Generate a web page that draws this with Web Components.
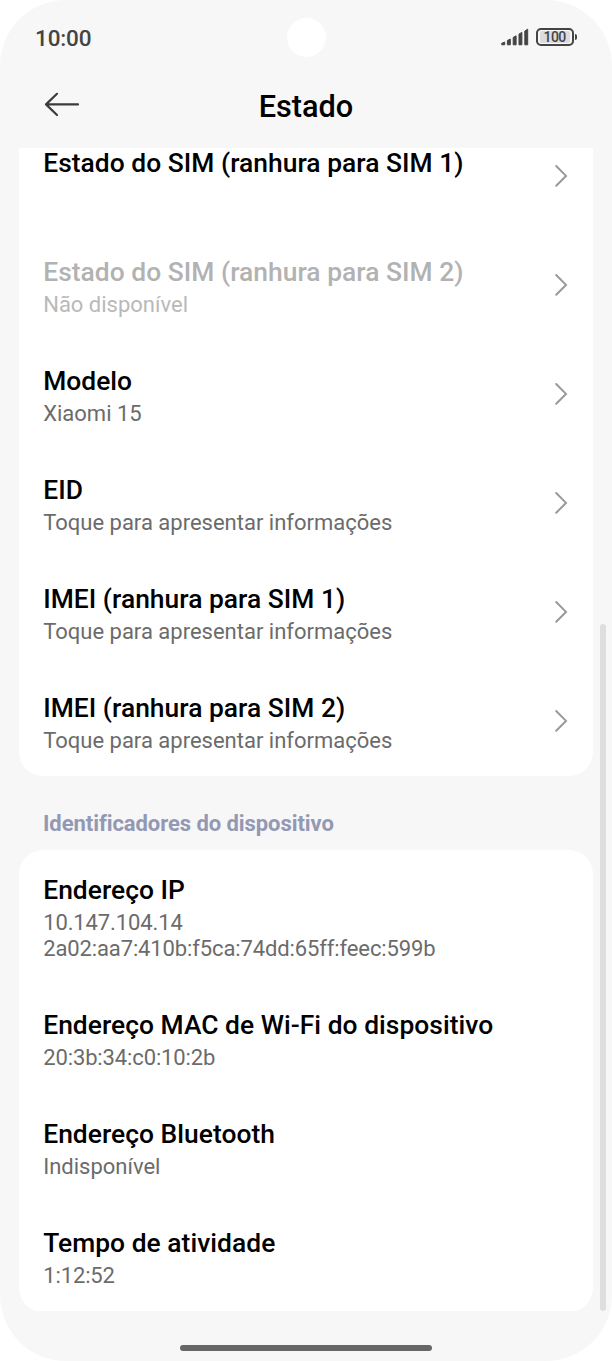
<!DOCTYPE html>
<html lang="pt">
<head>
<meta charset="utf-8">
<title>Estado</title>
<style>
html,body{margin:0;background:#fff}
body{font-family:Roboto,"Liberation Sans",sans-serif;color:#000}
.num{letter-spacing:-.12px}
</style>
</head>
<body>
<phone-screen>
  <status-bar slot="status" time="10:00" battery="100"></status-bar>
  <title-bar slot="title">Estado</title-bar>
  <settings-card class="first">
    <setting-row link>Estado do SIM (ranhura para SIM 1)</setting-row>
    <setting-row link disabled>Estado do SIM (ranhura para SIM 2)<span slot="sub">Não disponível</span></setting-row>
    <setting-row link>Modelo<span slot="sub">Xiaomi 15</span></setting-row>
    <setting-row link>EID<span slot="sub">Toque para apresentar informações</span></setting-row>
    <setting-row link>IMEI (ranhura para SIM 1)<span slot="sub">Toque para apresentar informações</span></setting-row>
    <setting-row link>IMEI (ranhura para SIM 2)<span slot="sub">Toque para apresentar informações</span></setting-row>
  </settings-card>
  <section-label>Identificadores do dispositivo</section-label>
  <settings-card>
    <setting-row>Endereço IP<span slot="sub" class="num">10.147.104.14<br>2a02:aa7:410b:f5ca:74dd:65ff:feec:599b</span></setting-row>
    <setting-row>Endereço MAC de Wi-Fi do dispositivo<span slot="sub" class="num">20:3b:34:c0:10:2b</span></setting-row>
    <setting-row>Endereço Bluetooth<span slot="sub">Indisponível</span></setting-row>
    <setting-row>Tempo de atividade<span slot="sub" class="num">1:12:52</span></setting-row>
  </settings-card>
</phone-screen>
<script>
const define = (name, html, init) => customElements.define(name, class extends HTMLElement {
  constructor() {
    super();
    this.attachShadow({ mode: 'open' }).innerHTML = html;
  }
  connectedCallback() { if (init) init(this, this.shadowRoot); }
});

define('phone-screen', `
<style>
:host{display:flex;flex-direction:column;position:relative;width:612px;height:1361px;background:#f7f7f7;border-radius:66px;overflow:hidden}
main{height:1163px;overflow:hidden;padding:0 19px;flex:none}
main ::slotted(.first){--pad-top:26px;--pad-bottom:22px;margin-top:-26px}
.thumb{position:absolute;left:600px;top:624px;width:6px;height:687px;border-radius:3px;background:#dedede}
footer{flex:1;display:flex;justify-content:center;align-items:flex-start;padding-top:34px}
footer i{width:252px;height:6px;border-radius:3px;background:#666}
</style>
<slot name="status"></slot><slot name="title"></slot>
<main><slot></slot></main>
<div class="thumb"></div>
<footer><i></i></footer>`);

define('status-bar', `
<style>
:host{display:grid;grid-template-columns:1fr 39px 1fr;align-items:center;height:74px;padding:0 35px 0 35px;box-sizing:border-box;color:#444}
time{font-size:22.5px;font-weight:500;line-height:26px;letter-spacing:-.15px;margin-top:2px}
.camera{width:39px;height:39px;border-radius:50%;background:#fff}
.icons{display:flex;justify-content:flex-end;align-items:center;gap:7px}
.battery{display:flex;align-items:center}
.cell{width:38px;height:18px;box-sizing:border-box;border:2px solid #444;border-radius:5px;padding:1px 2px}
.cell span{display:block;height:100%;background:#dcdce0;border-radius:2px;font-size:14px;font-weight:500;line-height:13px;text-align:center;letter-spacing:-.5px}
.tip{width:2.4px;height:6px;border-radius:0 2px 2px 0;background:#444;margin-left:1px}
</style>
<time></time><div class="camera"></div>
<div class="icons">
<svg width="28" height="18" viewBox="0 0 28 18" fill="#444" stroke="#444" stroke-width="1" stroke-linejoin="round"><path d="M.6 15.4L3.7 14V16.8H.8ZM6.4 12.5L9.3 11V16.8H6.4ZM12.2 9.4L15.1 7.8V16.8H12.2ZM18 6L20.9 4.4V16.8H18ZM23.8 3L26.7 1.2V16.8H23.8Z"/></svg>
<div class="battery"><div class="cell"><span></span></div><div class="tip"></div></div>
</div>`, (el, root) => {
  root.querySelector('time').textContent = el.getAttribute('time');
  root.querySelector('.cell span').textContent = el.getAttribute('battery');
});

define('title-bar', `
<style>
:host{display:grid;grid-template-columns:48px 1fr 48px;height:74px;padding:0 36px;box-sizing:border-box}
svg{margin:17px 0 0 8px}
h1{margin:15px 0 0;font-size:30.7px;line-height:36px;font-weight:500;text-align:center}
</style>
<svg width="36" height="26" viewBox="0 0 36 26" fill="none" stroke="#3c3c3c" stroke-width="2.2" stroke-linecap="round" stroke-linejoin="round"><path d="M34 13.4H2M13 2.8L2 13.4L13 24"/></svg>
<h1><slot></slot></h1>`);

define('settings-card', `
<style>:host{display:block;background:#fff;border-radius:24px;overflow:hidden}</style>
<slot></slot>`);

define('section-label', `
<style>:host{display:block;height:73.5px;box-sizing:border-box;padding:35px 24px 0;font-size:22px;line-height:26px;font-weight:700;letter-spacing:-.07px;color:#9398b4}</style>
<slot></slot>`);

define('setting-row', `
<style>
:host{display:flex;align-items:center;min-height:109px;box-sizing:border-box;padding:var(--pad-top,25px) 24px var(--pad-bottom,23px) 24.2px;color:#000;--sub:#6b6b6b}
:host([disabled]){color:#b2b2b2;--sub:#b9b9b9}
.text{flex:1;align-self:flex-start}
.name{font-size:26.4px;line-height:31px;font-weight:500;letter-spacing:.03px}
.sub{margin-top:4px;font-size:22px;line-height:26px;color:var(--sub)}
svg{display:none;flex:none;position:relative;top:-2.3px}
:host([link]) svg{display:block}
</style>
<div class="text"><div class="name"><slot></slot></div><div class="sub"><slot name="sub"></slot></div></div>
<svg width="15" height="24" viewBox="0 0 15 24" fill="none" stroke="#999" stroke-width="2" stroke-linecap="round"><path d="M2.2 2L12 11.9L2.2 21.8"/></svg>`);
</script>
</body>
</html>
